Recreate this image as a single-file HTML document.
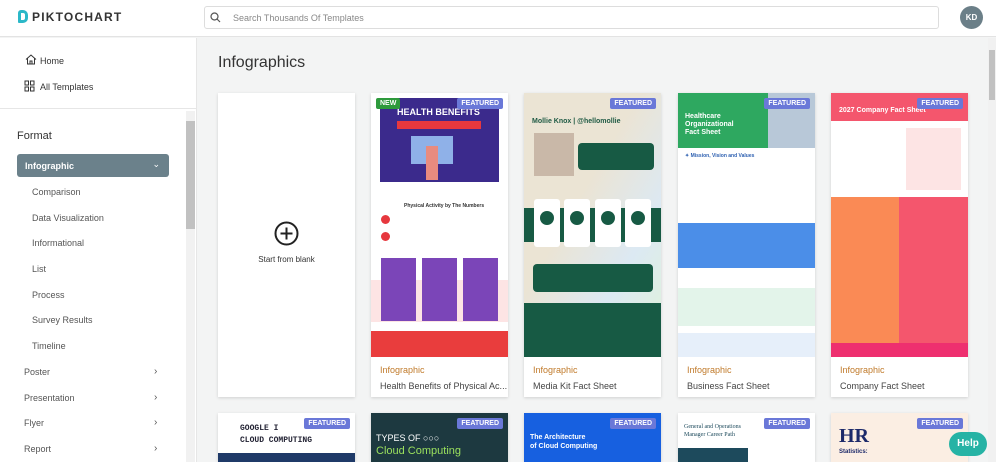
<!DOCTYPE html>
<html><head><meta charset="utf-8">
<style>
*{box-sizing:border-box;margin:0;padding:0}
html{width:996px;height:462px;overflow:hidden}
body{width:996px;height:462px;overflow:hidden;font-family:"Liberation Sans",sans-serif;background:#f3f4f4;position:relative;color:#333}
.hdr{position:absolute;left:0;top:0;width:996px;height:37px;background:#fff;border-bottom:1px solid #e3e3e3}
.logo{position:absolute;left:18px;top:10px;font-weight:bold;font-size:12px;letter-spacing:1.2px;color:#333}
.logo i{display:inline-block;width:10px;height:13px;border:3px solid #2bb8c8;border-radius:3px 5px 5px 1px;vertical-align:-2px;margin-right:4px}
.search{position:absolute;left:204px;top:6px;width:735px;height:23px;border:1px solid #ddd;border-radius:3px;background:#fff;font-size:9px;color:#888;padding:6px 0 0 28px}
.avatar{position:absolute;left:960px;top:6px;width:23px;height:23px;border-radius:50%;background:#6b7f88;color:#fff;font-size:8px;font-weight:bold;text-align:center;line-height:23px}
.side{position:absolute;left:0;top:38px;width:197px;height:424px;background:#fff;border-right:1px solid #e6e6e6}
.side .nav{font-size:9px;color:#333;position:absolute;left:40px}
.sep{position:absolute;left:0;top:70px;width:197px;height:1px;background:#e6e6e6}
.sb{position:absolute;left:186px;top:73px;width:9px;height:351px;background:#f1f1f1}
.sb div{position:absolute;left:0;top:10px;width:9px;height:108px;background:#c1c1c1}
.fmt{position:absolute;left:17px;top:130px;font-size:11px;color:#333}
.act{position:absolute;left:17px;top:154px;width:152px;height:23px;background:#6b818b;border-radius:3px;color:#fff;font-size:9px;font-weight:bold;padding:7px 8px}
.sub{position:absolute;left:32px;font-size:9px;color:#555}
.top{position:absolute;left:24px;font-size:9px;color:#555}
.chev{position:absolute;left:154px;font-size:10px;color:#555}
h1{position:absolute;left:218px;top:54px;font-weight:normal;font-size:16px;color:#333}
.card{position:absolute;top:93px;width:137px;height:304px;background:#fff;box-shadow:0 1px 3px rgba(0,0,0,.15);overflow:hidden}
.img{position:absolute;left:0;top:0;width:137px;height:264px;overflow:hidden}
.cat{position:absolute;left:9px;top:272px;font-size:9px;color:#c07a2a}
.ttl{position:absolute;left:9px;top:288px;font-size:9px;color:#444;white-space:nowrap}
.feat{position:absolute;right:5px;top:5px;background:#6a78d8;color:#fff;font-size:7px;font-weight:bold;padding:2px 4px;border-radius:2px}
.new{position:absolute;left:5px;top:5px;background:#2e9a3c;color:#fff;font-size:7px;font-weight:bold;padding:2px 4px;border-radius:2px}
.b{position:absolute}
.card2{position:absolute;top:413px;width:137px;height:49px;overflow:hidden;box-shadow:0 1px 3px rgba(0,0,0,.15)}
.msb{position:absolute;left:988px;top:38px;width:8px;height:424px;background:#f1f1f1}
.msb div{position:absolute;left:1px;top:12px;width:6px;height:50px;background:#c1c1c1}
.help{position:absolute;left:949px;top:432px;width:38px;height:24px;border-radius:12px;background:#26b3a5;color:#fff;font-weight:bold;font-size:10px;text-align:center;line-height:24px}
</style></head><body>
<div class="hdr">
<div class="logo"><i></i>PIKTOCHART</div>
<div class="search">Search Thousands Of Templates</div>
<svg style="position:absolute;left:210px;top:12px" width="11" height="11"><circle cx="4.5" cy="4.5" r="3.5" fill="none" stroke="#555" stroke-width="1.2"/><path d="M7 7l3 3" stroke="#555" stroke-width="1.2"/></svg>
<div class="avatar">KD</div>
</div>
<div class="side">
<svg style="position:absolute;left:25px;top:16px" width="12" height="11"><path d="M1 5.5L6 1l5 4.5M2.5 4.5V10h7V4.5M5 10V7h2v3" fill="none" stroke="#333" stroke-width="1"/></svg>
<div class="nav" style="top:18px">Home</div>
<svg style="position:absolute;left:24px;top:42px" width="11" height="12"><rect x="1" y="1" width="3.5" height="4" fill="none" stroke="#333"/><rect x="6.5" y="1" width="3.5" height="4" fill="none" stroke="#333"/><rect x="1" y="7" width="3.5" height="4" fill="none" stroke="#333"/><rect x="6.5" y="7" width="3.5" height="4" fill="none" stroke="#333"/></svg>
<div class="nav" style="top:44px">All Templates</div>
<div class="sep"></div>
<div class="sb"><div></div></div>
</div>
<div class="fmt">Format</div>
<div class="act">Infographic<span style="position:absolute;right:9px;top:5px;font-weight:normal">&#8964;</span></div>
<div class="sub" style="top:187px">Comparison</div>
<div class="sub" style="top:213px">Data Visualization</div>
<div class="sub" style="top:238px">Informational</div>
<div class="sub" style="top:264px">List</div>
<div class="sub" style="top:290px">Process</div>
<div class="sub" style="top:315px">Survey Results</div>
<div class="sub" style="top:341px">Timeline</div>
<div class="top" style="top:367px">Poster</div><div class="chev" style="top:366px">&#8250;</div>
<div class="top" style="top:393px">Presentation</div><div class="chev" style="top:392px">&#8250;</div>
<div class="top" style="top:418px">Flyer</div><div class="chev" style="top:417px">&#8250;</div>
<div class="top" style="top:444px">Report</div><div class="chev" style="top:443px">&#8250;</div>

<h1>Infographics</h1>

<div class="card" style="left:218px">
<svg style="position:absolute;left:56px;top:128px" width="25" height="25"><circle cx="12.5" cy="12.5" r="11" fill="none" stroke="#222" stroke-width="2"/><path d="M12.5 6.5v12M6.5 12.5h12" stroke="#222" stroke-width="2"/></svg>
<div style="position:absolute;left:0;width:137px;top:162px;text-align:center;font-size:8px;color:#333">Start from blank</div>
</div>

<div class="card" style="left:371px"><div class="img" style="background:#fff">
<div class="b" style="left:9px;top:5px;width:119px;height:84px;background:#3b2a8c"></div>
<div class="b" style="left:26px;top:14px;font-size:9px;font-weight:bold;color:#fff">HEALTH BENEFITS</div>
<div class="b" style="left:26px;top:28px;width:84px;height:8px;background:#e6383e"></div>
<div class="b" style="left:40px;top:43px;width:42px;height:28px;background:#8fb1e8"></div>
<div class="b" style="left:55px;top:53px;width:12px;height:34px;background:#e88b7f"></div>
<div class="b" style="left:33px;top:110px;font-size:5px;font-weight:bold;color:#333">Physical Activity by The Numbers</div>
<div class="b" style="left:10px;top:122px;width:9px;height:9px;border-radius:50%;background:#e6383e"></div>
<div class="b" style="left:10px;top:139px;width:9px;height:9px;border-radius:50%;background:#e6383e"></div>
<div class="b" style="left:0;top:187px;width:137px;height:42px;background:#fde4e4"></div>
<div class="b" style="left:10px;top:165px;width:35px;height:63px;background:#7b45b8"></div>
<div class="b" style="left:51px;top:165px;width:35px;height:63px;background:#7b45b8"></div>
<div class="b" style="left:92px;top:165px;width:35px;height:63px;background:#7b45b8"></div>
<div class="b" style="left:0;top:238px;width:137px;height:26px;background:#e93d3d"></div>
</div><div class="new">NEW</div><div class="feat">FEATURED</div>
<div class="cat">Infographic</div><div class="ttl">Health Benefits of Physical Ac...</div></div>

<div class="card" style="left:524px"><div class="img" style="background:linear-gradient(120deg,#ebe4d4 40%,#dce9f3 70%,#e0f3d8)">
<div class="b" style="left:8px;top:25px;font-size:7px;font-weight:bold;color:#1f5a44">Mollie Knox | @hellomollie</div>
<div class="b" style="left:10px;top:40px;width:40px;height:43px;background:#c9b8a8"></div>
<div class="b" style="left:54px;top:50px;width:76px;height:27px;background:#175a44;border-radius:4px"></div>
<div class="b" style="left:0;top:115px;width:137px;height:34px;background:#175a44"></div>
<div class="b" style="left:10px;top:106px;width:26px;height:48px;background:#fff;border-radius:3px"></div>
<div class="b" style="left:40px;top:106px;width:26px;height:48px;background:#fff;border-radius:3px"></div>
<div class="b" style="left:71px;top:106px;width:26px;height:48px;background:#fff;border-radius:3px"></div>
<div class="b" style="left:101px;top:106px;width:26px;height:48px;background:#fff;border-radius:3px"></div>
<div class="b" style="left:16px;top:118px;width:14px;height:14px;border-radius:50%;background:#175a44"></div>
<div class="b" style="left:46px;top:118px;width:14px;height:14px;border-radius:50%;background:#175a44"></div>
<div class="b" style="left:77px;top:118px;width:14px;height:14px;border-radius:50%;background:#175a44"></div>
<div class="b" style="left:107px;top:118px;width:14px;height:14px;border-radius:50%;background:#175a44"></div>
<div class="b" style="left:9px;top:171px;width:120px;height:28px;background:#175a44;border-radius:4px"></div>
<div class="b" style="left:0;top:210px;width:137px;height:54px;background:#175a44"></div>
</div><div class="feat">FEATURED</div>
<div class="cat">Infographic</div><div class="ttl">Media Kit Fact Sheet</div></div>

<div class="card" style="left:678px"><div class="img" style="background:#fff">
<div class="b" style="left:0;top:0;width:137px;height:55px;background:#2ea860"></div>
<div class="b" style="left:90px;top:0;width:47px;height:55px;background:#b8c8d8"></div>
<div class="b" style="left:7px;top:20px;font-size:7px;font-weight:bold;color:#fff;line-height:8px">Healthcare<br>Organizational<br>Fact Sheet</div>
<div class="b" style="left:7px;top:60px;font-size:5px;color:#2c5fb0;font-weight:bold">✦ Mission, Vision and Values</div>
<div class="b" style="left:0;top:130px;width:137px;height:45px;background:#4b8ee8"></div>
<div class="b" style="left:0;top:195px;width:137px;height:38px;background:#e3f4ea"></div>
<div class="b" style="left:0;top:240px;width:137px;height:24px;background:#e6effa"></div>
</div><div class="feat">FEATURED</div>
<div class="cat">Infographic</div><div class="ttl">Business Fact Sheet</div></div>

<div class="card" style="left:831px"><div class="img" style="background:#fff">
<div class="b" style="left:0;top:0;width:137px;height:28px;background:#f4566d"></div>
<div class="b" style="left:8px;top:14px;font-size:7px;font-weight:bold;color:#fff">2027 Company Fact Sheet</div>
<div class="b" style="left:75px;top:35px;width:55px;height:62px;background:#fde4e4"></div>
<div class="b" style="left:0;top:104px;width:68px;height:146px;background:#fa8a55"></div>
<div class="b" style="left:68px;top:104px;width:69px;height:146px;background:#f4566d"></div>
<div class="b" style="left:0;top:250px;width:137px;height:14px;background:#ee2f6f"></div>
</div><div class="feat">FEATURED</div>
<div class="cat">Infographic</div><div class="ttl">Company Fact Sheet</div></div>

<div class="card2" style="left:218px;background:#fff"><div class="b" style="left:22px;top:10px;font-family:'Liberation Mono',monospace;font-size:8px;font-weight:bold;color:#223;line-height:12px">GOOGLE I<br>CLOUD COMPUTING</div><div class="b" style="left:0;top:40px;width:137px;height:14px;background:#1f3a68"></div><div class="feat">FEATURED</div></div>
<div class="card2" style="left:371px;background:#1d3940"><div class="b" style="left:5px;top:20px;font-size:9px;color:#fff">TYPES OF ○○○</div><div class="b" style="left:5px;top:32px;font-size:11px;color:#9be15d">Cloud Computing</div><div class="feat">FEATURED</div></div>
<div class="card2" style="left:524px;background:#1760e0"><div class="b" style="left:6px;top:20px;font-size:7px;font-weight:bold;color:#fff;line-height:9px">The Architecture<br>of Cloud Computing</div><div class="feat">FEATURED</div></div>
<div class="card2" style="left:678px;background:#fff"><div class="b" style="left:6px;top:10px;font-family:'Liberation Serif',serif;font-size:6px;color:#1d4a5c;line-height:8px">General and Operations<br>Manager Career Path</div><div class="b" style="left:0;top:35px;width:70px;height:25px;background:#1d4a5c"></div><div class="feat">FEATURED</div></div>
<div class="card2" style="left:831px;background:#fbeee3"><div class="b" style="left:8px;top:12px;font-family:'Liberation Serif',serif;font-size:20px;font-weight:bold;color:#1d2a6a">HR</div><div class="b" style="left:8px;top:36px;font-size:6px;font-weight:bold;color:#1d2a6a">Statistics:</div><div class="feat">FEATURED</div></div>

<div class="msb"><div></div></div>
<div class="help">Help</div>
</body></html>
